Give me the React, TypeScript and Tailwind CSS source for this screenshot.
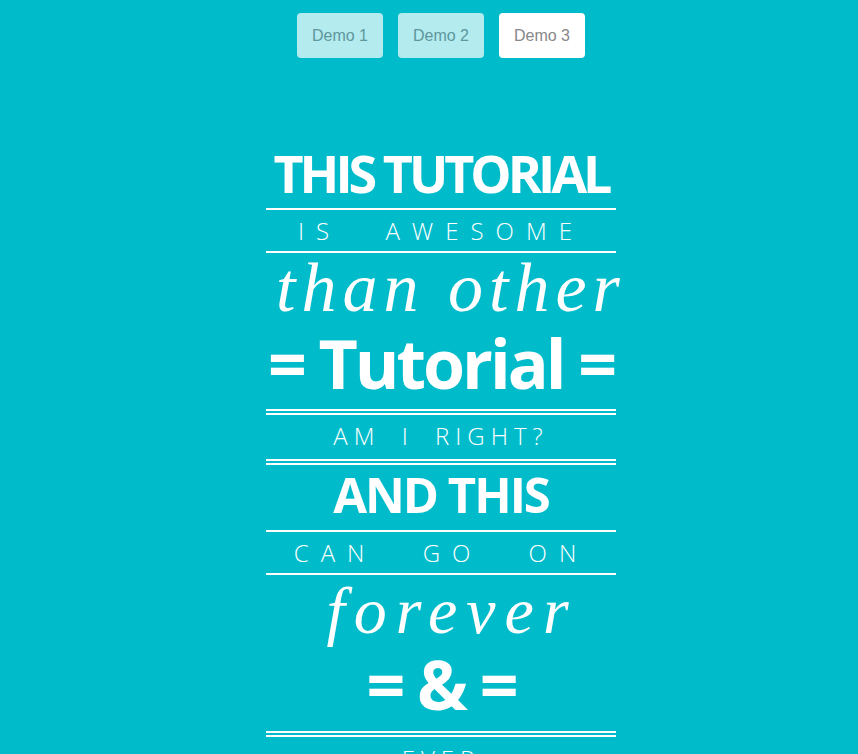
import React from "react";

const sans = "font-['Open_Sans',sans-serif]";
const serif = "font-['Liberation_Serif',serif]";

function Line() {
    return <div className="h-[2px] bg-white"></div>;
}

function DoubleLine() {
    return <div className="h-[6px] border-y-2 border-white"></div>;
}

export default function App() {
    const demos = ["Demo 1", "Demo 2", "Demo 3"];

    return (
        <div className="min-h-screen bg-[#00bccb] pl-[24px] pb-[60px]">
            {/* Demo switcher */}
            <div className="flex justify-center gap-[15px] pt-[13px]">
                {demos.map((d, i) => (
                    <button
                        key={d}
                        className={
                            "w-[86px] h-[45px] rounded-[4px] bg-white text-[16px] text-[#888] font-['Liberation_Sans',Arial,sans-serif] " +
                            (i === 2 ? "" : "opacity-70")
                        }
                    >
                        {d}
                    </button>
                ))}
            </div>

            {/* Typography poster */}
            <div className="w-[350px] mx-auto mt-[79px] text-white text-center">
                <h1 className={`${sans} font-bold text-[52px] leading-[71px] tracking-[-4px] h-[71px] whitespace-nowrap`}>
                    THIS TUTORIAL
                </h1>
                <Line />
                <p className={`${sans} font-light text-[24px] leading-[41px] h-[41px] tracking-[12px] [word-spacing:26px] whitespace-nowrap`}>
                    IS AWESOME
                </p>
                <Line />
                <p className={`${serif} italic text-[70px] leading-[69px] h-[69px] pl-[10px] tracking-[6px] whitespace-nowrap`}>
                    than other
                </p>
                <p className={`${sans} font-bold text-[68px] leading-[81px] h-[87px] pb-[6px] tracking-[-3px] whitespace-nowrap`}>
                    = Tutorial =
                </p>
                <DoubleLine />
                <p className={`${sans} font-light text-[24px] leading-[41px] h-[44px] pb-[3px] tracking-[6px] [word-spacing:9px] whitespace-nowrap`}>
                    AM I RIGHT?
                </p>
                <DoubleLine />
                <p className={`${sans} font-bold text-[49px] leading-[58px] h-[65px] pb-[7px] tracking-[-2px] whitespace-nowrap`}>
                    AND THIS
                </p>
                <Line />
                <p className={`${sans} font-light text-[24px] leading-[41px] h-[41px] tracking-[12px] [word-spacing:28px] whitespace-nowrap`}>
                    CAN GO ON
                </p>
                <Line />
                <p className={`${serif} italic text-[66px] leading-[71px] h-[71px] pl-[22px] tracking-[9px] whitespace-nowrap`}>
                    forever
                </p>
                <p className={`${sans} font-bold text-[68px] leading-[76px] h-[85px] pb-[9px] tracking-[-3px] whitespace-nowrap`}>
                    = &amp; =
                </p>
                <DoubleLine />
                <p className={`${sans} font-light text-[24px] leading-[43px] h-[43px] tracking-[6px] whitespace-nowrap`}>
                    EVER
                </p>
                <Line />
            </div>
        </div>
    );
}
